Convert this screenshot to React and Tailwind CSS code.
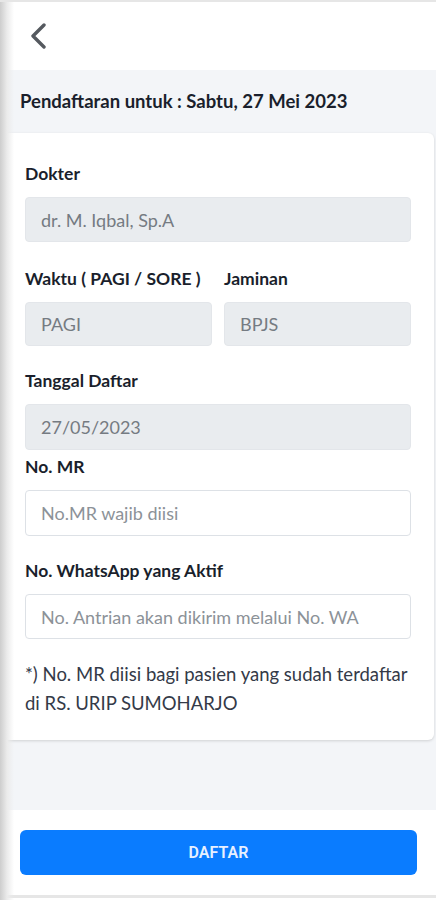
const fieldBase =
  "w-full rounded-[4px] px-[15px] text-[18px] outline-none font-['Lato',_sans-serif]";

const Label = ({ children, className = "" }) => (
  <p className={`text-[17.5px] leading-[22px] font-bold text-[#1a1f2c] ${className}`}>{children}</p>
);

const ReadOnlyField = ({ value, className = "" }) => (
  <input
    readOnly
    value={value}
    className={`${fieldBase} bg-[#e9ecef] border border-[#e3e6ea] text-[#757b82] ${className}`}
  />
);

const TextField = ({ placeholder, className = "" }) => (
  <input
    placeholder={placeholder}
    className={`${fieldBase} bg-white border border-[#dde1e6] text-[#333] placeholder:text-[#8c9298] ${className}`}
  />
);

export default function App() {
  return (
    <div className="relative min-h-[900px] w-[436px] bg-white font-['Lato',_sans-serif] border-t-2 border-[#e6e6e6]">
      {/* header */}
      <div className="h-[68px] flex items-center pl-[30px]">
        <svg width="17" height="26" viewBox="0 0 17 26" fill="none">
          <polyline points="14,2 3,13 14,24" stroke="#55595f" strokeWidth="3.4" strokeLinecap="round" strokeLinejoin="round" />
        </svg>
      </div>

      <div className="bg-[#f3f5f8]">
        <div className="h-[63px] flex items-center px-5">
          <h2 className="text-[18.5px] font-bold text-[#1a1f2c]">Pendaftaran untuk : Sabtu, 27 Mei 2023</h2>
        </div>

        {/* form card */}
        <div className="bg-white mr-[2px] rounded-md shadow-[0_1px_3px_rgba(0,0,0,0.15)] pl-[25px] pr-[23px] pt-[30px] pb-[22px]">
          <Label className="mb-3">Dokter</Label>
          <ReadOnlyField value="dr. M. Iqbal, Sp.A" className="h-[45px]" />

          <div className="grid grid-cols-2 gap-x-3 mt-[26px]">
            <div>
              <Label className="mb-3">Waktu ( PAGI / SORE )</Label>
              <ReadOnlyField value="PAGI" className="h-[44px]" />
            </div>
            <div>
              <Label className="mb-3">Jaminan</Label>
              <ReadOnlyField value="BPJS" className="h-[44px]" />
            </div>
          </div>

          <Label className="mt-6 mb-3">Tanggal Daftar</Label>
          <ReadOnlyField value="27/05/2023" className="h-[46px]" />

          <Label className="mt-[6px] mb-3">No. MR</Label>
          <TextField placeholder="No.MR wajib diisi" className="h-[46px]" />

          <Label className="mt-6 mb-3">No. WhatsApp yang Aktif</Label>
          <TextField placeholder="No. Antrian akan dikirim melalui No. WA" className="h-[45px]" />

          <p className="mt-[21px] text-[18.5px] leading-[29px] text-[#343a48]">
            *) No. MR diisi bagi pasien yang sudah terdaftar di RS. URIP SUMOHARJO
          </p>
        </div>

        <div className="h-[70px]" />
      </div>

      {/* footer */}
      <div className="bg-white pt-5 pb-5 px-5 border-b-[3px] border-[#e6e6e6]">
        <button className="w-[397px] h-[45px] rounded-md bg-[#0a7cff] text-[#e8f0ff] text-[16px] font-semibold font-['Roboto',_sans-serif]">
          DAFTAR
        </button>
      </div>

      {/* left edge shade */}
      <div className="pointer-events-none absolute inset-y-0 left-0 w-[14px] bg-gradient-to-r from-[#cdcdcd] via-[#ebebeb] to-transparent" />
    </div>
  );
}
